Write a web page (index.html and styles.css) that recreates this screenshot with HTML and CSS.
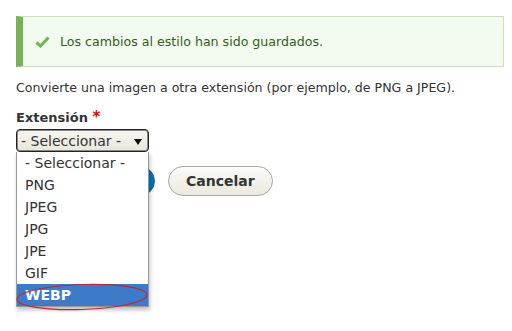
FILE: index.html
```html
<!DOCTYPE html>
<html lang="es">

<head>
    <meta charset="UTF-8">
    <meta name="viewport" content="width=device-width, initial-scale=1.0">
    <title>Convertir imagen</title>
    <link rel="stylesheet" href="styles.css">
</head>

<body>
    <div class="messages status">
        <svg class="check" width="15" height="12" viewBox="0 0 15 12">
            <path d="M1.5 6.5 L5.5 10 L13.5 1.5" fill="none" stroke="#73b355" stroke-width="3"/>
        </svg>
        <span>Los cambios al estilo han sido guardados.</span>
    </div>

    <p class="description">Convierte una imagen a otra extensión (por ejemplo, de PNG a JPEG).</p>

    <div class="form-item">
        <label class="form-label">Extensión <span class="required">*</span></label>
        <div class="select-wrap">
            <div class="form-select">
                <span>- Seleccionar -</span>
                <span class="arrow"></span>
            </div>
            <ul class="select-list">
                <li>- Seleccionar -</li>
                <li>PNG</li>
                <li>JPEG</li>
                <li>JPG</li>
                <li>JPE</li>
                <li>GIF</li>
                <li class="active">WEBP</li>
            </ul>
            <!-- mark drawn over the chosen option -->
            <svg class="circle" width="136" height="30" viewBox="0 0 136 30">
                <ellipse cx="67" cy="15" rx="65" ry="12.5" fill="none" stroke="#b8283e" stroke-width="1.2" transform="rotate(-2 67 15)"/>
            </svg>
        </div>
    </div>

    <div class="form-actions">
        <button class="button button--primary">Añadir efecto</button>
        <button class="button">Cancelar</button>
    </div>
</body>

</html>
```

FILE: styles.css
```css
/* Page base */
html {
    height: 100%;
}

body {
    box-sizing: border-box;
    min-height: 100%;
    margin: 0;
    padding: 16px 16px 0 16px;
    font-family: "DejaVu Sans", "Lucida Grande", sans-serif;
    font-size: 12.6px;
    color: #333;
    background: #fff;
}

/* Status message box */
.messages {
    display: flex;
    align-items: center;
    gap: 10px;
    height: 49px;
    padding: 0 0 0 12px;
    margin-right: -8px;
    background: #f3faef;
    border: 1px solid #c9e1bd;
    border-left: 7px solid #77b259;
    color: #325e1c;
}

.check {
    flex: none;
    margin-top: 1px;
}

/* Intro text */
.description {
    margin: 13px 0 0 0;
    line-height: 16px;
}

/* Form field */
.form-item {
    margin-top: 13px;
}

.form-label {
    display: block;
    font-weight: bold;
    font-size: 13px;
    line-height: 16px;
}

.required {
    color: #e00;
    font-size: 15px;
}

.select-wrap {
    position: relative;
    width: 133px;
    margin-top: 3px;
}

.form-select {
    display: flex;
    align-items: center;
    justify-content: space-between;
    height: 21px;
    padding: 0 6px 0 4px;
    border: 1px solid #222;
    border-radius: 4px;
    background: linear-gradient(#f7f6f1, #e8e6dc);
    font-size: 14px;
    box-shadow: inset 0 0 0 1px #8a8a8a;
}

.arrow {
    width: 0;
    height: 0;
    border-left: 4px solid transparent;
    border-right: 4px solid transparent;
    border-top: 6px solid #111;
    margin-top: 2px;
}

/* Open option list */
.select-list {
    position: absolute;
    top: 100%;
    left: 0;
    z-index: 2;
    width: 131px;
    margin: 0;
    padding: 0;
    list-style: none;
    background: #fff;
    border: 1px solid #999;
    border-top: none;
    box-shadow: 1px 3px 4px rgba(0, 0, 0, 0.25);
    font-size: 14px;
}

.select-list li {
    height: 22px;
    line-height: 22px;
    padding-left: 8px;
    color: #333;
}

.select-list li:first-child {
    height: 22px;
    line-height: 23px;
}

.select-list .active {
    background: #3d7bc9;
    color: #fff;
    font-weight: bold;
}

.circle {
    position: absolute;
    z-index: 3;
    left: -1px;
    top: 153px;
}

/* Buttons */
.form-actions {
    display: flex;
    gap: 13px;
    margin-top: 14px;
}

.button {
    height: 30px;
    padding: 0 17px;
    border: 1px solid #a6a6a6;
    border-radius: 20px;
    background: linear-gradient(#fcfcfa, #e9e9dd);
    color: #333;
    font-family: "DejaVu Sans", "Lucida Grande", sans-serif;
    font-size: 14px;
    font-weight: bold;
}

.button--primary {
    width: 139px;
    background: linear-gradient(#007bc6, #0071b8);
    border-color: #1e5c90;
    color: #fff;
}
```
